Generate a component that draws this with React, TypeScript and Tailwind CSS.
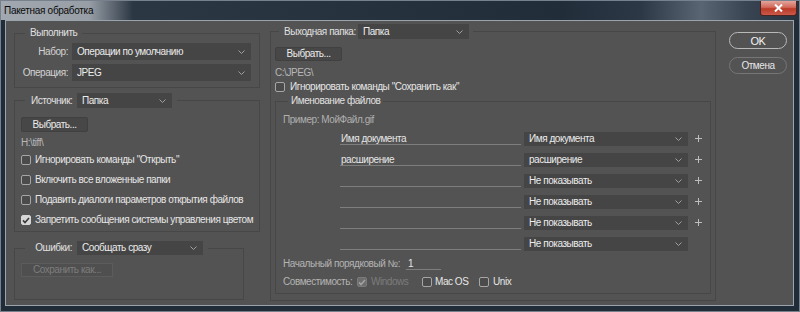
import clsx from "clsx";

function Chevron() {
    return (
        <svg width="7" height="4" viewBox="0 0 7 4" className="shrink-0">
            <path d="M0.5 0.5 L3.5 3.5 L6.5 0.5" fill="none" stroke="#a0a0a0" strokeWidth="1" />
        </svg>
    );
}

function Select({ value, className }: { value: string; className: string }) {
    return (
        <div
            className={clsx(
                "flex shrink-0 items-center justify-between bg-[#454545] pl-[5px] pr-[6px] text-[#ececec]",
                className
            )}
        >
            <span className="whitespace-nowrap">{value}</span>
            <Chevron />
        </div>
    );
}

function Checkbox({ checked = false, disabled = false }: { checked?: boolean; disabled?: boolean }) {
    return (
        <span
            className={clsx(
                "flex h-[10px] w-[10px] shrink-0 items-center justify-center rounded-[2px] border",
                disabled
                    ? "border-[#7a7a7a] bg-[#6d6d6d]"
                    : checked
                      ? "border-[#d6d6d6] bg-[#d6d6d6]"
                      : "border-[#a6a6a6] bg-[#4b4b4b]"
            )}
        >
            {checked && (
                <svg width="8" height="7" viewBox="0 0 8 7">
                    <path
                        d="M1 3.4 L3 5.5 L7 1"
                        fill="none"
                        stroke={disabled ? "#a2a2a2" : "#3a3a3a"}
                        strokeWidth="1.6"
                    />
                </svg>
            )}
        </span>
    );
}

function Plus() {
    return (
        <svg width="7" height="7" viewBox="0 0 7 7" className="ml-[7px] shrink-0">
            <path d="M3.5 0 V7 M0 3.5 H7" stroke="#bdbdbd" strokeWidth="1" />
        </svg>
    );
}

const namingRows = [
    { text: "Имя документа", option: "Имя документа", plus: true },
    { text: "расширение", option: "расширение", plus: true },
    { text: "", option: "Не показывать", plus: true },
    { text: "", option: "Не показывать", plus: true },
    { text: "", option: "Не показывать", plus: true },
    { text: "", option: "Не показывать", plus: false },
];

const sourceOptions = [
    { label: 'Игнорировать команды "Открыть"', checked: false },
    { label: "Включить все вложенные папки", checked: false },
    { label: "Подавить диалоги параметров открытия файлов", checked: false },
    { label: "Запретить сообщения системы управления цветом", checked: true },
];

export default function App() {
    return (
        <div className="flex h-[312px] w-[800px] flex-col border border-[#76818d] bg-[#212c39] font-['Liberation_Sans',Arial,sans-serif] text-[10px] leading-[14px] tracking-[-0.45px] text-[#e6e6e6]">
            {/* title bar */}
            <header className="flex h-[19px] shrink-0 items-start justify-between bg-[linear-gradient(90deg,#a1a8b0_0px,#979ea6_88px,#2c3744_132px,#222d3a_560px,#2c3846_640px,#5a6573_700px,#3a4553_745px,#27323f_798px)]">
                <h1 className="pl-[3px] pt-[3px] text-[10px] leading-[13px] tracking-[-0.3px] text-[#0a0a0a]">
                    Пакетная обработка
                </h1>
                <div className="mr-[2px] flex h-[15px] w-[37px] items-center justify-center rounded-b-[3px] border border-t-0 border-[#4a2420] bg-[linear-gradient(180deg,#e3a59c_0%,#d2685a_45%,#bb3a27_55%,#c9594a_100%)]">
                    <svg width="9" height="8" viewBox="0 0 9 8">
                        <path d="M1 0.5 L8 7.5 M8 0.5 L1 7.5" stroke="#ffffff" strokeWidth="2" />
                    </svg>
                </div>
            </header>

            {/* dialog body */}
            <div className="ml-[4px] flex h-[286px] w-[789px] border border-[#9aa4ae] bg-[#535353]">
                {/* left column */}
                <div className="ml-[8px] flex w-[246px] shrink-0 flex-col">
                    <fieldset className="mt-[5px] border border-[#474747] pb-[6px]">
                        <legend className="ml-[10px] px-[5px] text-[#e0e0e0]">Выполнить</legend>
                        <div className="mt-[3px] flex flex-col gap-[4px]">
                            <div className="flex items-center">
                                <span className="w-[53px] text-right text-[#d4d4d4]">Набор:</span>
                                <Select value="Операции по умолчанию" className="ml-[4px] h-[17px] w-[179px]" />
                            </div>
                            <div className="flex items-center">
                                <span className="w-[53px] text-right text-[#d4d4d4]">Операция:</span>
                                <Select value="JPEG" className="ml-[4px] h-[17px] w-[179px]" />
                            </div>
                        </div>
                    </fieldset>

                    <fieldset className="mt-[5px] border border-[#474747] pb-[1px]">
                        <legend className="ml-[10px] flex items-center pl-[6px] pr-[5px]">
                            <span className="w-[41px] text-right text-[#e0e0e0]">Источник:</span>
                            <Select value="Папка" className="ml-[5px] h-[15px] w-[95px]" />
                        </legend>
                        <div className="ml-[6px] mt-[9px] flex h-[15px] w-[67px] items-center justify-center rounded-[2px] border border-[#404040] bg-[#474747] text-[#ececec]">
                            Выбрать...
                        </div>
                        <p className="ml-[6px] mt-[4px] text-[#b6b6b6]">H:\tiff\</p>
                        {sourceOptions.map((o) => (
                            <div key={o.label} className="ml-[6px] flex h-[20px] items-center">
                                <Checkbox checked={o.checked} />
                                <span className="ml-[4px] whitespace-nowrap">{o.label}</span>
                            </div>
                        ))}
                    </fieldset>

                    <fieldset className="mt-[9px] w-[230px] border border-[#474747] pb-[22px]">
                        <legend className="ml-[10px] flex items-center pl-[6px] pr-[5px]">
                            <span className="w-[41px] text-right text-[#e0e0e0]">Ошибки:</span>
                            <Select value="Сообщать сразу" className="ml-[5px] h-[14px] w-[126px]" />
                        </legend>
                        <div className="ml-[6px] mt-[8px] flex h-[14px] w-[92px] items-center justify-center border border-[#5c5c5c] bg-[#4f4f4f] text-[#7d7d7d]">
                            Сохранить как...
                        </div>
                    </fieldset>
                </div>

                {/* output folder */}
                <fieldset className="ml-[10px] mt-[3px] w-[446px] shrink-0 self-start border border-[#474747] pb-[6px]">
                    <legend className="ml-[8px] flex items-center pl-[5px] pr-[4px]">
                        <span className="w-[69px] whitespace-nowrap text-[#e0e0e0]">Выходная папка:</span>
                        <Select value="Папка" className="ml-[5px] h-[15px] w-[111px]" />
                    </legend>
                    <div className="ml-[4px] mt-[8px] flex h-[14px] w-[67px] items-center justify-center rounded-[2px] border border-[#404040] bg-[#474747] text-[#ececec]">
                        Выбрать...
                    </div>
                    <p className="ml-[4px] mt-[5px] text-[#b6b6b6]">C:\JPEG\</p>
                    <div className="ml-[4px] flex h-[14px] items-center">
                        <Checkbox />
                        <span className="ml-[5px]">Игнорировать команды "Сохранить как"</span>
                    </div>

                    <fieldset className="mx-[4px] border border-[#474747] pb-[2px]">
                        <legend className="ml-[12px] px-[3px] text-[#e0e0e0]">Именование файлов</legend>
                        <p className="ml-[7px] mt-[5px] text-[#b0b0b0]">Пример: МойФайл.gif</p>
                        <div className="mt-[1px] flex flex-col">
                            {namingRows.map((r, i) => (
                                <div key={i} className="flex h-[21px] items-center">
                                    <div className="ml-[64px] h-[12px] w-[181px] shrink-0 border-b border-[#7e7e7e] pl-[1px] leading-[11px]">
                                        {r.text}
                                    </div>
                                    <Select value={r.option} className="ml-[3px] h-[14px] w-[164px]" />
                                    {r.plus && <Plus />}
                                </div>
                            ))}
                        </div>
                        <div className="mt-[1px] flex h-[18px] items-center text-[#b4b4b4]">
                            <span className="ml-[7px] w-[123px] whitespace-nowrap">Начальный порядковый №:</span>
                            <div className="h-[12px] w-[35px] border-b border-[#7e7e7e] pl-[2px] leading-[11px] text-[#e6e6e6]">
                                1
                            </div>
                        </div>
                        <div className="flex h-[18px] items-center">
                            <span className="ml-[7px] w-[74px] whitespace-nowrap text-[#b4b4b4]">Совместимость:</span>
                            <Checkbox checked disabled />
                            <span className="ml-[4px] w-[51px] text-[#7c7c7c]">Windows</span>
                            <Checkbox />
                            <span className="ml-[3px] w-[44px]">Mac OS</span>
                            <Checkbox />
                            <span className="ml-[4px]">Unix</span>
                        </div>
                    </fieldset>
                </fieldset>

                {/* action buttons */}
                <div className="ml-[13px] mt-[11px] flex w-[58px] shrink-0 flex-col gap-[8px]">
                    <button className="flex h-[17px] items-center justify-center rounded-full border-[1.5px] border-[#b9b9b9] text-[11px] text-[#f2f2f2]">
                        OK
                    </button>
                    <button className="flex h-[17px] items-center justify-center rounded-full border-[1.5px] border-[#767676] text-[#e6e6e6]">
                        Отмена
                    </button>
                </div>
            </div>
        </div>
    );
}
